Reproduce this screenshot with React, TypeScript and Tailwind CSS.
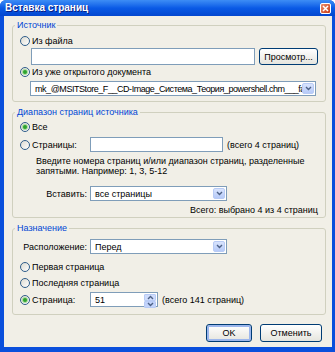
import React from 'react';

const Radio: React.FC<{ checked?: boolean }> = ({ checked }) => (
  <span className="flex h-[10px] w-[10px] shrink-0 items-center justify-center rounded-full border border-[#2f5d8a] bg-gradient-to-br from-[#dcdad0] to-white">
    {checked && <span className="h-[4px] w-[4px] rounded-full bg-[#2ea32e] shadow-[0_0_0_1px_#a8dba0]" />}
  </span>
);

const Arrow: React.FC<{ up?: boolean }> = ({ up }) => (
  <svg width="7" height="5" viewBox="0 0 7 5">
    <path d={up ? 'M1 4L3.5 1.5L6 4' : 'M1 1L3.5 3.5L6 1'} stroke="#4d6185" strokeWidth="1.4" fill="none" />
  </svg>
);

const DropBtn: React.FC = () => (
  <span className="ml-auto flex h-full w-[12px] shrink-0 items-center justify-center rounded-[2px] border border-[#b8cbf5] bg-gradient-to-b from-[#d9e4fd] to-[#b6caf8]">
    <Arrow />
  </span>
);

const Select: React.FC<{ value: string; w: string; tight?: boolean }> = ({ value, w, tight }) => (
  <div className={`flex h-[15px] items-center border border-[#7f9db9] bg-white p-[1px] ${w}`}>
    <span className={`overflow-hidden whitespace-nowrap pl-[3px] ${tight ? 'tracking-[-0.45px]' : ''}`}>{value}</span>
    <DropBtn />
  </div>
);

const Group: React.FC<{ title: string; className?: string; children: React.ReactNode }> = ({ title, className, children }) => (
  <fieldset className={`rounded-[3px] border border-[#d0d0bf] pl-[7px] pr-[7px] ${className ?? ''}`}>
    <legend className="ml-[-5px] px-[2px] leading-[10px] text-[#0046d5]">{title}</legend>
    {children}
  </fieldset>
);

export default function App() {
  return (
    <div className="flex h-[352px] w-[335px] flex-col overflow-hidden rounded-t-[6px] bg-[#0a4fdc] text-[9px] leading-[10px] text-black [font-family:'Liberation_Sans',Arial,sans-serif]">
      <div className="flex h-[16px] shrink-0 items-center bg-gradient-to-b from-[#3d8df5] via-[#0a5ae6] to-[#0447cf] pl-[5px] pr-[4px]">
        <span className="text-[10px] font-bold text-white [text-shadow:1px_1px_0_#0a1e80]">Вставка страниц</span>
        <span className="ml-auto flex h-[11px] w-[11px] items-center justify-center rounded-[2px] border border-white bg-gradient-to-br from-[#e98c68] to-[#c9380e]">
          <svg width="7" height="7" viewBox="0 0 7 7">
            <path d="M1 1L6 6M6 1L1 6" stroke="white" strokeWidth="1.5" />
          </svg>
        </span>
      </div>
      <div className="mx-[4px] mr-[3px] mb-[5px] flex flex-1 flex-col bg-[#f1efe7] pl-[8px] pr-[6px]">
        <Group title="Источник" className="mt-[4px] pb-[5px]">
          <div className="mt-[5px] flex h-[12px] items-center gap-[2px]">
            <Radio />
            <span>Из файла</span>
          </div>
          <div className="mt-[1px] ml-[11px] flex h-[17px] items-stretch gap-[4px]">
            <div className="w-[224px] border border-[#7f9db9] bg-white" />
            <button className="w-[59px] rounded-[3px] border border-[#003c74] bg-gradient-to-b from-white to-[#e6e5de]">Просмотр...</button>
          </div>
          <div className="mt-[1px] flex h-[12px] items-center gap-[2px]">
            <Radio checked />
            <span>Из уже открытого документа</span>
          </div>
          <div className="mt-[3px] ml-[10px]">
            <Select tight value="mk_@MSITStore_F__CD-Image_Система_Теория_powershell.chm___faq.l" w="w-[286px]" />
          </div>
        </Group>

        <Group title="Диапазон страниц источника" className="mt-[5px] pb-[2px]">
          <div className="mt-[4px] flex h-[12px] items-center gap-[2px]">
            <Radio checked />
            <span>Все</span>
          </div>
          <div className="mt-[4px] flex h-[15px] items-center">
            <div className="flex w-[70px] items-center gap-[2px]">
              <Radio />
              <span>Страницы:</span>
            </div>
            <div className="h-full w-[133px] border border-[#7f9db9] bg-white" />
            <span className="ml-[4px]">(всего 4 страниц)</span>
          </div>
          <p className="mt-[4px] ml-[16px] whitespace-nowrap">
            Введите номера страниц и/или диапазон страниц, разделенные
            <br />
            запятыми. Например: 1, 3, 5-12
          </p>
          <div className="mt-[10px] flex items-center gap-[3px]">
            <span className="w-[67px] text-right">Вставить:</span>
            <Select value="все страницы" w="w-[137px]" />
          </div>
          <div className="mt-[4px] text-right">Всего: выбрано 4 из 4 страниц</div>
        </Group>

        <Group title="Назначение" className="mt-[5px] pb-[7px]">
          <div className="mt-[6px] flex items-center gap-[3px]">
            <span className="w-[67px] text-right">Расположение:</span>
            <Select value="Перед" w="w-[137px]" />
          </div>
          <div className="mt-[7px] flex h-[12px] items-center gap-[2px]">
            <Radio />
            <span>Первая страница</span>
          </div>
          <div className="mt-[4px] flex h-[12px] items-center gap-[2px]">
            <Radio />
            <span>Последняя страница</span>
          </div>
          <div className="mt-[3px] flex h-[15px] items-center">
            <div className="flex w-[70px] items-center gap-[2px]">
              <Radio checked />
              <span>Страница:</span>
            </div>
            <div className="flex h-full w-[68px] items-center border border-[#7f9db9] bg-white p-[1px]">
              <span className="pl-[3px]">51</span>
              <span className="ml-auto flex h-full w-[12px] flex-col">
                <span className="flex flex-1 items-center justify-center rounded-[1px] border border-[#b8cbf5] bg-[#cfdcfc]">
                  <Arrow up />
                </span>
                <span className="flex flex-1 items-center justify-center rounded-[1px] border border-[#b8cbf5] bg-[#c2d3fb]">
                  <Arrow />
                </span>
              </span>
            </div>
            <span className="ml-[4px]">(всего 141 страниц)</span>
          </div>
        </Group>

        <div className="mt-[9px] flex justify-end gap-[8px] pr-[4px]">
          <button className="h-[18px] w-[46px] rounded-[3px] border border-[#003c74] bg-gradient-to-b from-white to-[#e6e5de] shadow-[inset_0_0_0_2px_#9cb6ec]">OK</button>
          <button className="h-[18px] w-[62px] rounded-[3px] border border-[#003c74] bg-gradient-to-b from-white to-[#e6e5de]">Отменить</button>
        </div>
      </div>
    </div>
  );
}
